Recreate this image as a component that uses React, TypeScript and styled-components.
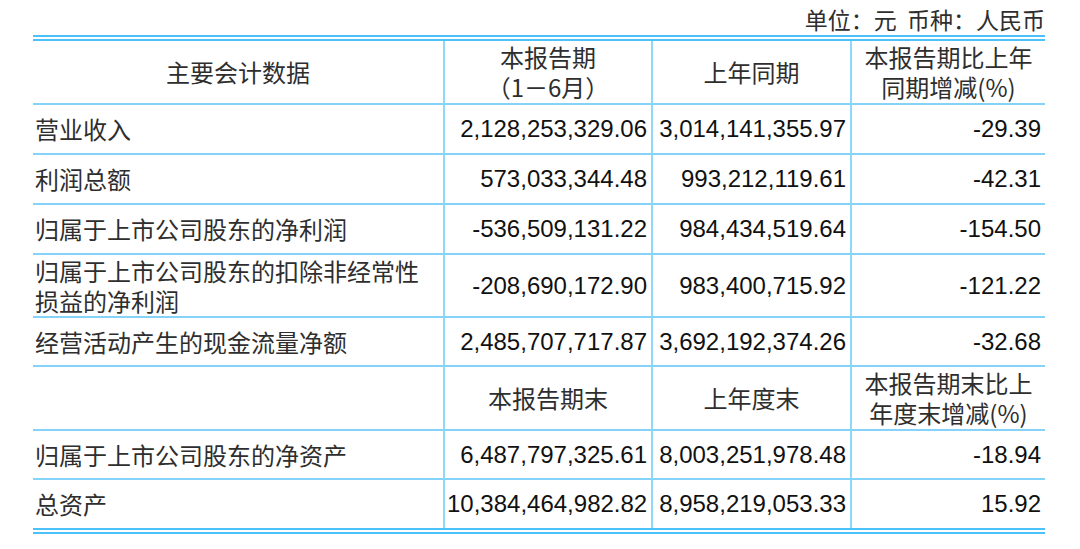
import React from "react";
import styled, { createGlobalStyle } from "styled-components";

const Global = createGlobalStyle`
  html, body { margin: 0; padding: 0; background: #ffffff; }
  body { font-family: "Liberation Sans", "Noto Sans CJK SC", sans-serif; }
`;

const Page = styled.div`
  width: 1080px;
  height: 549px;
  padding-left: 33px;
  box-sizing: border-box;
  overflow: hidden;
`;

const Unit = styled.div`
  width: 1012px;
  height: 35px;
  box-sizing: border-box;
  padding-top: 4px;
  padding-right: 0;
  line-height: 30px;
  text-align: right;
  font-family: "Noto Sans CJK SC", sans-serif;
  font-size: 23px;
  color: #2e2e2e;
  white-space: pre;
`;

const Table = styled.table`
  width: 1012px;
  table-layout: fixed;
  border-collapse: separate;
  border-spacing: 0;
  border-top: 6px double #4cc2fa;
  border-bottom: 6px double #4cc2fa;
`;

const Row = styled.tr<{ $h: number; $last?: boolean }>`
  height: ${(p) => p.$h}px;
  & > td {
    border-bottom: ${(p) => (p.$last ? "none" : "2px solid #86d3fa")};
  }
`;

const Cell = styled.td<{ $align: "left" | "center" | "right"; $num?: boolean }>`
  padding: 0 ${(p) => (p.$align === "right" ? "4px" : "2px")} 0 2px;
  vertical-align: middle;
  text-align: ${(p) => p.$align};
  font-family: ${(p) =>
    p.$num ? `"Liberation Sans", Arial, sans-serif` : `"Noto Sans CJK SC", sans-serif`};
  font-size: 24px;
  line-height: 30px;
  color: ${(p) => (p.$num ? "#111111" : "#2e2e2e")};
  white-space: nowrap;
  overflow: visible;
  & + & {
    border-left: 2px solid #8fd7fb;
  }
`;

const Line = styled.span`
  display: block;
  height: 30px;
  line-height: 30px;
`;

type DataRow = { label: string[]; a: string; b: string; c: string; h: number };

const rows1: DataRow[] = [
  { label: ["营业收入"], a: "2,128,253,329.06", b: "3,014,141,355.97", c: "-29.39", h: 50 },
  { label: ["利润总额"], a: "573,033,344.48", b: "993,212,119.61", c: "-42.31", h: 50 },
  { label: ["归属于上市公司股东的净利润"], a: "-536,509,131.22", b: "984,434,519.64", c: "-154.50", h: 50 },
  {
    label: ["归属于上市公司股东的扣除非经常性", "损益的净利润"],
    a: "-208,690,172.90",
    b: "983,400,715.92",
    c: "-121.22",
    h: 63,
  },
  { label: ["经营活动产生的现金流量净额"], a: "2,485,707,717.87", b: "3,692,192,374.26", c: "-32.68", h: 49 },
];

const rows2: DataRow[] = [
  { label: ["归属于上市公司股东的净资产"], a: "6,487,797,325.61", b: "8,003,251,978.48", c: "-18.94", h: 49 },
  { label: ["总资产"], a: "10,384,464,982.82", b: "8,958,219,053.33", c: "15.92", h: 48 },
];

const Lines: React.FC<{ items: string[] }> = ({ items }) =>
  items.length === 1 ? <>{items[0]}</> : <>{items.map((t, i) => <Line key={i}>{t}</Line>)}</>;

const DataRows: React.FC<{ items: DataRow[]; lastIndex?: number }> = ({ items, lastIndex }) => (
  <>
    {items.map((r, i) => (
      <Row key={i} $h={r.h} $last={i === lastIndex}>
        <Cell $align="left"><Lines items={r.label} /></Cell>
        <Cell $align="right" $num>{r.a}</Cell>
        <Cell $align="right" $num>{r.b}</Cell>
        <Cell $align="right" $num>{r.c}</Cell>
      </Row>
    ))}
  </>
);

export default function App() {
  return (
    <Page>
      <Global />
      <Unit>{"单位：元  币种：人民币"}</Unit>
      <Table>
        <colgroup>
          <col style={{ width: 410 }} />
          <col style={{ width: 208 }} />
          <col style={{ width: 199 }} />
          <col style={{ width: 195 }} />
        </colgroup>
        <tbody>
          <Row $h={64}>
            <Cell $align="center">主要会计数据</Cell>
            <Cell $align="center"><Lines items={["本报告期", "（1－6月）"]} /></Cell>
            <Cell $align="center">上年同期</Cell>
            <Cell $align="center"><Lines items={["本报告期比上年", "同期增减(%)"]} /></Cell>
          </Row>
          <DataRows items={rows1} />
          <Row $h={64}>
            <Cell $align="center"></Cell>
            <Cell $align="center">本报告期末</Cell>
            <Cell $align="center">上年度末</Cell>
            <Cell $align="center"><Lines items={["本报告期末比上", "年度末增减(%)"]} /></Cell>
          </Row>
          <DataRows items={rows2} lastIndex={1} />
        </tbody>
      </Table>
    </Page>
  );
}
